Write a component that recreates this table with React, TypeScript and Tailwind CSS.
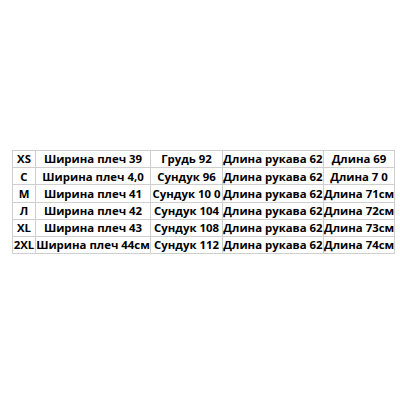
const rows = [
  ["XS", "Ширина плеч 39", "Грудь 92", "Длина рукава 62", "Длина 69"],
  ["C", "Ширина плеч 4,0", "Сундук 96", "Длина рукава 62", "Длина 7 0"],
  ["M", "Ширина плеч 41", "Сундук 10 0", "Длина рукава 62", "Длина 71см"],
  ["Л", "Ширина плеч 42", "Сундук 104", "Длина рукава 62", "Длина 72см"],
  ["XL", "Ширина плеч 43", "Сундук 108", "Длина рукава 62", "Длина 73см"],
  ["2XL", "Ширина плеч 44см", "Сундук 112", "Длина рукава 62", "Длина 74см"],
];

const widths = ["w-[23px]", "w-[115px]", "w-[72px]", "w-[101px]", "w-[71px]"];

export default function App() {
  return (
    <div className="w-[400px] h-[400px] bg-white pt-[150px] pl-[12px]">
      <table
        className="border-collapse table-fixed w-[382px] text-[11.4px] font-bold text-black leading-none"
        style={{ fontFamily: '"Open Sans", "DejaVu Sans", sans-serif' }}
      >
        <colgroup>
          {widths.map((w, i) => (
            <col key={i} className={w} />
          ))}
        </colgroup>
        <tbody>
          {rows.map((row, i) => (
            <tr key={i} className="h-[17.2px]">
              {row.map((cell, j) => (
                <td
                  key={j}
                  className="border border-[#cfcfcf] text-center whitespace-nowrap overflow-visible p-0"
                >
                  {cell}
                </td>
              ))}
            </tr>
          ))}
        </tbody>
      </table>
    </div>
  );
}
